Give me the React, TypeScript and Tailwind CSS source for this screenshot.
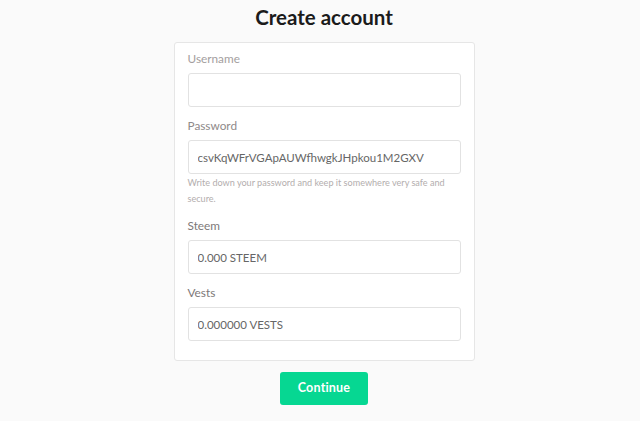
const fields = [
  { label: 'Username', value: '', tone: 'text-[#a39e9e]' },
  { label: 'Password', value: 'csvKqWFrVGApAUWfhwgkJHpkou1M2GXV', tone: 'text-[#8f8a8a]', help: true },
  { label: 'Steem', value: '0.000 STEEM', tone: 'text-[#7d7878]' },
  { label: 'Vests', value: '0.000000 VESTS', tone: 'text-[#7d7878]' },
];

export default function App() {
  return (
    <div
      className="min-h-[421px] bg-[#fafafa] pl-[8px] text-[#333]"
      style={{ fontFamily: 'Lato, "Noto Sans", sans-serif' }}
    >
      <div className="flex flex-col items-center pt-[3px]">
        <h1 className="text-[20.5px] font-bold leading-[28px] text-[#1b1b1b]">Create account</h1>

        <form className="mt-[11px] w-[301px] rounded-[3px] border border-[#e6e6e6] bg-white px-[13px] pt-[7px] pb-[19px]">
          {fields.map((f, i) => (
            <div key={f.label} className={i > 0 ? 'mt-[10px]' : ''}>
              <label className={`block text-[11.8px] leading-[18px] ${f.tone}`}>{f.label}</label>
              <input
                readOnly
                value={f.value}
                className="mt-[5px] block h-[34px] w-full rounded-[3px] border border-[#e2e2e2] bg-white px-[9px] text-[11.5px] text-[#666] outline-none"
                style={{ fontFamily: 'Lato, "Noto Sans", sans-serif' }}
              />
              {f.help && (
                <p className="mt-[1px] text-[9.1px] leading-[16px] text-[#b3aeae]">
                  Write down your password and keep it somewhere very safe and secure.
                </p>
              )}
            </div>
          ))}
        </form>

        <button
          type="button"
          className="mt-[11px] h-[33px] w-[88px] rounded-[3px] bg-[#06d792] text-[12.5px] font-bold tracking-[0.2px] text-white"
        >
          Continue
        </button>
      </div>
    </div>
  );
}
